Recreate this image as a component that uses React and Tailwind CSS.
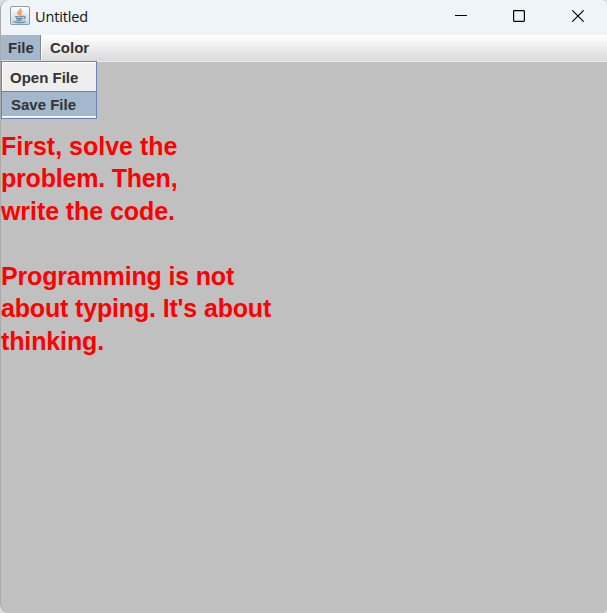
function JavaIcon() {
  return (
    <svg width="20" height="20" viewBox="0 0 20 20" fill="none">
      <defs>
        <linearGradient id="tile" x1="0" y1="0" x2="0" y2="1">
          <stop offset="0" stopColor="#ffffff" />
          <stop offset="1" stopColor="#c9d5df" />
        </linearGradient>
      </defs>
      <rect x="0.5" y="0.5" width="19" height="18" rx="1.5" fill="url(#tile)" stroke="#8c9daa" />
      <path d="M10.600 2.500c1 2-3.300 2.800-2.600 4.700.3.900 1.300 1.300 1.100 2.300M12.300 5.200c-2.500 1-2.800 2-1.600 3 .5.500.2 1-.2 1.400" stroke="#f0954d" strokeWidth="1.600" />
      <path d="M5 10.300c1.500.7 6.500.7 8 0M5.800 12.100c2 .7 5 .7 6.800 0M6.300 13.800c1.800.6 4 .6 5.600 0M13 10.300c3-.8 2.700 2.300.2 2.800" stroke="#6f93af" strokeWidth="1.400" />
      <path d="M4 15c-1.300 1.800 10 2 11.500.2" stroke="#6f93af" strokeWidth="1.400" />
    </svg>
  );
}

function TitleBar() {
  return (
    <header className="flex h-[35px] items-start bg-[#eef4f7]">
      <div className="flex flex-1 items-start pt-[6px] pl-[9px]">
        <JavaIcon />
        <span className="ml-[5px] font-['Open_Sans','Noto_Sans',sans-serif] text-[14.5px] leading-[21px] tracking-[-0.15px] text-[#111]">
          Untitled
        </span>
      </div>
      <svg width="152" height="35" viewBox="0 0 152 35" fill="none" stroke="#000" strokeWidth="1.200">
        <path d="M0 15.500h12" strokeWidth="1" />
        <rect x="58.600" y="10.600" width="10.800" height="10.800" rx="0.800" />
        <path d="M117.300 10.300l11.400 11.400M128.700 10.300l-11.400 11.400" />
      </svg>
    </header>
  );
}

function FileMenu() {
  return (
    <div className="absolute top-[26px] left-0 flex h-[58px] w-[96px] flex-col border border-[#6382bf] bg-[#eeeeee]">
      <div className="h-[29px] border-t border-l border-white pl-[7px] leading-[30px]">Open File</div>
      <div className="h-[25px] border-t border-[#6382bf] bg-[#a3b8cc] pl-[9px] leading-[25px]">Save File</div>
      <div className="h-px bg-white" />
    </div>
  );
}

function MenuBar() {
  return (
    <nav className="relative flex h-[27px] border-b border-[#eeeeee] bg-linear-to-b from-white to-[#dadada] text-[15px] font-bold text-[#333]">
      <div className="h-[25px] w-[40px] border-r border-[#7a8a99] bg-[#a3b8cc] pl-[7px] leading-[26px]">File</div>
      <div className="h-[25px] w-px bg-white" />
      <div className="pl-[8px] leading-[26px]">Color</div>
      <FileMenu />
    </nav>
  );
}

export default function App() {
  return (
    <div className="h-[613px] w-[607px] overflow-hidden bg-[#dcdcdc] font-['Liberation_Sans',Arial,sans-serif]">
      <div className="flex h-full flex-col overflow-hidden rounded-l-[9px] rounded-r-[5px] border-l border-[#aaaaaa] bg-[#c0c0c0]">
        <TitleBar />
        <MenuBar />
        <main className="flex-1 pt-[67.700px] text-[25px] leading-[32.500px] font-bold text-[#ff0000]">
          <p>First, solve the</p>
          <p className="tracking-[-0.200px]">problem. Then,</p>
          <p className="tracking-[-0.080px]">write the code.</p>
          <p className="pt-[32.500px] tracking-[-0.170px]">Programming is not</p>
          <p className="tracking-[-0.160px]">about typing. It's about</p>
          <p className="tracking-[-0.130px]">thinking.</p>
        </main>
      </div>
    </div>
  );
}
